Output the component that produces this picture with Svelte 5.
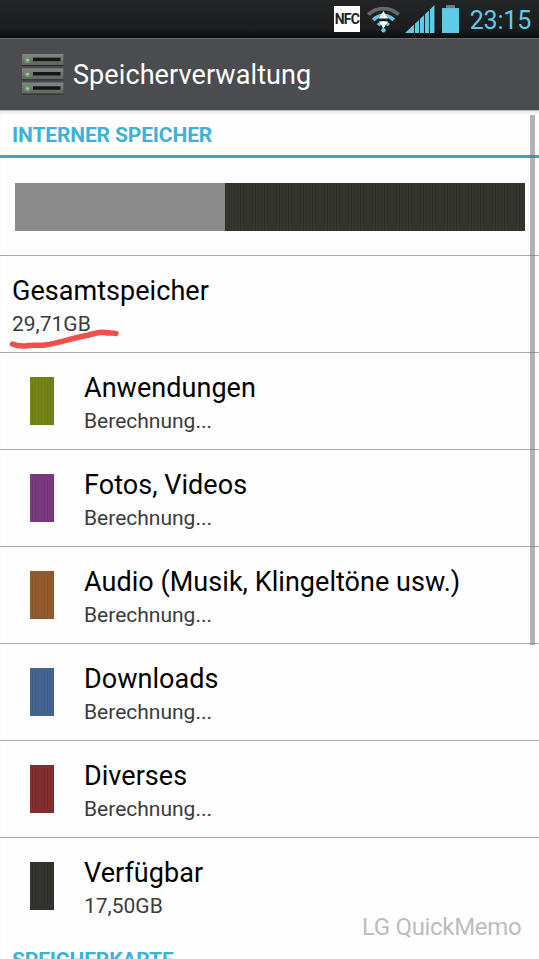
<script lang="ts">
  interface Category {
    name: string;
    value: string;
    color: string;
  }

  const pending = 'Berechnung...';

  const categories: Category[] = [
    { name: 'Anwendungen', value: pending, color: 'olive' },
    { name: 'Fotos, Videos', value: pending, color: 'purple' },
    { name: 'Audio (Musik, Klingeltöne usw.)', value: pending, color: 'brown' },
    { name: 'Downloads', value: pending, color: 'blue' },
    { name: 'Diverses', value: pending, color: 'red' },
    { name: 'Verfügbar', value: '17,50GB', color: 'dark' },
  ];

  const usedPercent = 41.2;
</script>

<div class="screen">
  <div class="status-bar">
    <span class="nfc">NFC</span>
    <svg class="wifi" width="34" height="28" viewBox="0 0 34 28" fill="none">
      <path d="M1.200 9.500C10 1.500 23 1.500 31.800 9.500" stroke="#66686a" stroke-width="3.800" />
      <path d="M6.300 15C12 9 21 9 26.700 15" stroke="#5fcbe8" stroke-width="3.600" />
      <path d="M11 20.200C14 17 19 17 22 20.200" stroke="#5fcbe8" stroke-width="3.400" />
      <circle cx="16.500" cy="25.300" r="2.200" fill="#5fcbe8" />
      <path d="M16.500 6L21 13.500H12Z" fill="#fff" />
      <path d="M12 16.500H21L16.500 23.500Z" fill="#fff" />
    </svg>
    <svg class="signal" width="30" height="28" viewBox="0 0 30 28">
      <path d="M0 28L9 19.600V28ZM10 18.700L14 15V28H10ZM15 14L19 10.300V28H15ZM20 9.300L24 5.600V28H20ZM25 4.600L29.500 0V28H25Z" fill="#5fcbe8" />
    </svg>
    <svg class="battery" width="17" height="28" viewBox="0 0 17 28">
      <rect x="4" width="9" height="3" fill="#77797b" />
      <rect y="3" width="17" height="25" fill="#5fcbe8" />
    </svg>
    <span class="clock">23:15</span>
  </div>

  <header class="action-bar">
    <svg class="app-icon" width="42" height="41" viewBox="0 0 42 41">
      <defs>
        <linearGradient id="unit" x1="0" y1="0" x2="0" y2="1">
          <stop offset="0" stop-color="#858783" />
          <stop offset="1" stop-color="#62645f" />
        </linearGradient>
      </defs>
      {#each [0, 14.3, 28.6] as y}
        <rect x="0" y={y + 0.8} width="41.500" height="11.200" fill="#292b2b" />
        <rect x="0" {y} width="41.500" height="11" fill="url(#unit)" />
        <rect x="11" y={y + 3.7} width="27.500" height="3.500" fill="#151716" />
        <circle cx="5.500" cy={y + 6} r="3" fill="#719568" />
        <circle cx="5.500" cy={y + 6} r="1.300" fill="#a5d69a" />
      {/each}
    </svg>
    <h1>Speicherverwaltung</h1>
  </header>

  <main class="content">
    <h2 class="section">INTERNER SPEICHER</h2>

    <div class="usage">
      <div class="usage-bar">
        <div class="usage-fill" style:width="{usedPercent}%"></div>
      </div>
    </div>

    <div class="row total">
      <div class="labels">
        <span class="name">Gesamtspeicher</span>
        <span class="value">29,71GB</span>
      </div>
      <svg class="marker" width="112" height="22" viewBox="0 0 112 22">
        <path d="M5.500 15C10 17 16 17.500 22 16.500C28 15.500 32 17 38 16C50 14.500 62 10 77 7C87 5 91 2.500 98 3.500C102 4.500 106 3.500 109 4.500" />
      </svg>
    </div>

    {#each categories as category}
      <div class="row">
        <div class="swatch {category.color}"></div>
        <div class="labels">
          <span class="name">{category.name}</span>
          <span class="value">{category.value}</span>
        </div>
      </div>
    {/each}

    <h2 class="section next">SPEICHERKARTE</h2>
  </main>

  <div class="scrollbar"></div>
  <span class="watermark">LG QuickMemo</span>
</div>

<style>
  :global(body) {
    margin: 0;
    background: #fdfdfd;
  }

  .screen {
    position: relative;
    width: 539px;
    height: 959px;
    overflow: hidden;
    background: #fefefe;
    font-family: Roboto, 'Liberation Sans', sans-serif;
    color: #000;
  }

  h1,
  h2 {
    margin: 0;
  }

  .status-bar {
    display: flex;
    box-sizing: border-box;
    height: 38px;
    padding: 5px 8px 0 334px;
    background: linear-gradient(#222425, #1b1d1e 75%, #0c0e0e);
  }

  .nfc {
    width: 26px;
    height: 26px;
    margin-top: 1px;
    background: #fff;
    color: #222;
    font-size: 14px;
    font-weight: 700;
    line-height: 27px;
    text-align: center;
    letter-spacing: -0.8px;
  }

  .wifi {
    margin-left: 7px;
  }

  .signal {
    margin-left: 4px;
  }

  .battery {
    margin-left: 7px;
  }

  .clock {
    margin-left: 11px;
    color: #5fcbe8;
    font-size: 25px;
    line-height: 31px;
    letter-spacing: -0.2px;
    white-space: nowrap;
  }

  .action-bar {
    display: flex;
    box-sizing: border-box;
    height: 72px;
    padding: 15px 0 0 22px;
    border-top: 1px solid #696c6e;
    background: #4a4c50;
    color: #fff;
  }

  .action-bar h1 {
    margin-left: 9px;
    font-size: 27px;
    font-weight: 400;
    line-height: 42px;
    letter-spacing: 0.09px;
  }

  .content {
    border-top: 1px solid #b6b6bc;
    box-shadow: inset 0 3px 3px -1px #e8e6ea;
  }

  .section {
    box-sizing: border-box;
    height: 47px;
    padding-left: 12px;
    border-bottom: 3px solid #4ba0b8;
    color: #3eb1d5;
    font-size: 21px;
    font-weight: 700;
    line-height: 48px;
    letter-spacing: -0.14px;
  }

  .usage {
    box-sizing: border-box;
    height: 98px;
    padding: 25px 14px 24px 15px;
    border-bottom: 1px solid #a9a9ab;
  }

  .usage-bar {
    height: 48px;
    background: repeating-linear-gradient(90deg, #2e2f29 0 1px, #353630 1px 3px);
  }

  .usage-fill {
    height: 100%;
    background: #8a8a8a;
  }

  .row {
    display: flex;
    position: relative;
    box-sizing: border-box;
    height: 97px;
    padding: 19px 0 0 30px;
    border-bottom: 1px solid #a9a9ab;
  }

  .row:nth-last-child(2) {
    border-bottom-color: transparent;
  }

  .row.total {
    padding-left: 12px;
  }

  .labels {
    display: flex;
    flex-direction: column;
    white-space: nowrap;
  }

  .name {
    font-size: 27px;
    line-height: 32px;
    letter-spacing: 0.04px;
  }

  .value {
    color: #3b3b3b;
    font-size: 21px;
    line-height: 35px;
  }

  .swatch {
    width: 24px;
    height: 48px;
    margin: 5px 30px 0 0;
  }

  .olive {
    background: repeating-linear-gradient(90deg, #748318 0 2px, #6f7d12 2px 3px);
  }

  .purple {
    background: repeating-linear-gradient(90deg, #7b3b80 0 2px, #743479 2px 3px);
  }

  .brown {
    background: repeating-linear-gradient(90deg, #935c2e 0 2px, #8b5527 2px 3px);
  }

  .blue {
    background: repeating-linear-gradient(90deg, #456492 0 2px, #3f5d8b 2px 3px);
  }

  .red {
    background: repeating-linear-gradient(90deg, #822f2f 0 2px, #7a2929 2px 3px);
  }

  .dark {
    background: repeating-linear-gradient(90deg, #33342f 0 2px, #2d2e29 2px 3px);
  }

  /* hand-drawn stroke below the total */
  .marker {
    position: absolute;
    left: 7px;
    top: 73px;
    overflow: visible;
  }

  .marker path {
    fill: none;
    stroke: #ee514c;
    stroke-width: 5.5;
    stroke-linecap: round;
    stroke-linejoin: round;
  }

  .next {
    border-bottom: 0;
    line-height: 50px;
  }

  .scrollbar {
    position: absolute;
    top: 115px;
    left: 530px;
    width: 5px;
    height: 530px;
    background: rgba(110, 110, 110, 0.52);
  }

  .watermark {
    position: absolute;
    top: 912px;
    left: 362px;
    color: #bdbdbd;
    font-size: 24px;
    line-height: 30px;
    letter-spacing: -0.32px;
    white-space: nowrap;
  }
</style>
